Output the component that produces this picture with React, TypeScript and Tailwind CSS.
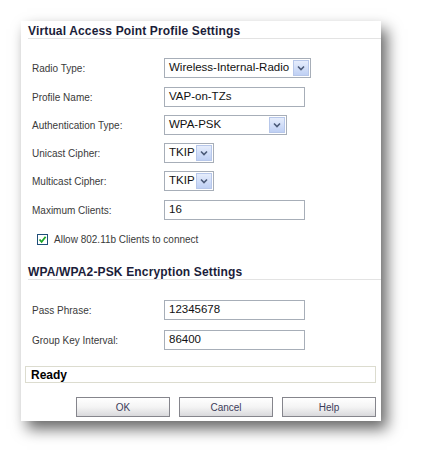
import React from "react";

const LABEL = "w-[143px] shrink-0 pl-[11px] text-[10px] text-[#3a3a3a] [font-family:'Liberation_Sans',Arial,sans-serif]";
const FIELD_TEXT = "text-[11.5px] text-[#111] [font-family:'Liberation_Sans',Arial,sans-serif]";

function Select({ value, width }: { value: string; width: string }) {
  return (
    <div className={`flex h-[20px] items-center border border-[#a7aeb8] bg-white ${width}`}>
      <span className={`flex-1 pl-[4px] leading-none ${FIELD_TEXT}`}>{value}</span>
      <div className="m-[1px] flex h-[16px] w-[16px] items-center justify-center border border-[#b7c7ea] bg-gradient-to-b from-[#e6edfc] to-[#bfd0f4]">
        <svg width="8" height="6" viewBox="0 0 8 6">
          <path d="M1 1.5 L4 4.5 L7 1.5" fill="none" stroke="#4b5a78" strokeWidth="1.6" />
        </svg>
      </div>
    </div>
  );
}

function TextField({ value }: { value: string }) {
  return (
    <div className={`flex h-[20px] w-[141px] items-center border border-[#a7aeb8] bg-white pl-[4px] leading-none ${FIELD_TEXT}`}>
      {value}
    </div>
  );
}

function Row({ label, children, mt }: { label: string; children: React.ReactNode; mt: string }) {
  return (
    <div className={`flex h-[20px] items-center ${mt}`}>
      <span className={LABEL}>{label}</span>
      {children}
    </div>
  );
}

function Heading({ text, mt }: { text: string; mt: string }) {
  return (
    <div className={`ml-[7px] h-[18px] border-b border-[#e3e3e3] pt-[3px] ${mt}`}>
      <span className="block text-[12px] font-bold leading-[14px] tracking-[0.15px] text-[#1b1d3a] [font-family:'Liberation_Sans',Arial,sans-serif]">
        {text}
      </span>
    </div>
  );
}

function Btn({ label }: { label: string }) {
  return (
    <button className="flex h-[20px] w-[94px] items-center justify-center border border-[#85858c] bg-gradient-to-b from-white via-[#f4f4f4] to-[#d9d9dc] text-[10px] text-[#3c3c5a] [font-family:'Liberation_Sans',Arial,sans-serif]">
      {label}
    </button>
  );
}

export default function App() {
  return (
    <div className="h-[463px] w-[423px] bg-white pl-[21px] pt-[21px]">
      <div className="flex h-[400px] w-[360px] flex-col bg-white shadow-[6px_8px_14px_rgba(0,0,0,0.6)]">
        <Heading text="Virtual Access Point Profile Settings" mt="mt-0" />

        <Row label="Radio Type:" mt="mt-[19px]">
          <Select value="Wireless-Internal-Radio" width="w-[147px]" />
        </Row>
        <Row label="Profile Name:" mt="mt-[9px]">
          <TextField value="VAP-on-TZs" />
        </Row>
        <Row label="Authentication Type:" mt="mt-[8px]">
          <Select value="WPA-PSK" width="w-[123px]" />
        </Row>
        <Row label="Unicast Cipher:" mt="mt-[8px]">
          <Select value="TKIP" width="w-[50px]" />
        </Row>
        <Row label="Multicast Cipher:" mt="mt-[8px]">
          <Select value="TKIP" width="w-[50px]" />
        </Row>
        <Row label="Maximum Clients:" mt="mt-[9px]">
          <TextField value="16" />
        </Row>

        <div className="ml-[16px] mt-[12px] flex h-[14px] items-center gap-[6px]">
          <div className="flex h-[11px] w-[11px] items-center justify-center border border-[#1f4f7a] bg-white">
            <svg width="9" height="9" viewBox="0 0 9 9">
              <path d="M1.5 4.5 L3.6 6.8 L7.6 1.8" fill="none" stroke="#1fa52a" strokeWidth="1.8" />
            </svg>
          </div>
          <span className="text-[10px] text-[#3a3a3a] [font-family:'Liberation_Sans',Arial,sans-serif]">
            Allow 802.11b Clients to connect
          </span>
        </div>

        <Heading text="WPA/WPA2-PSK Encryption Settings" mt="mt-[16px]" />

        <Row label="Pass Phrase:" mt="mt-[20px]">
          <TextField value="12345678" />
        </Row>
        <Row label="Group Key Interval:" mt="mt-[10px]">
          <TextField value="86400" />
        </Row>

        <div className="ml-[4px] mt-[16px] flex h-[17px] w-[351px] items-center border border-[#dcdccf] bg-white pl-[5px]">
          <span className="text-[12px] font-bold leading-none text-black [font-family:'Liberation_Sans',Arial,sans-serif]">Ready</span>
        </div>

        <div className="ml-[55px] mt-[14px] flex gap-[9px]">
          <Btn label="OK" />
          <Btn label="Cancel" />
          <Btn label="Help" />
        </div>
      </div>
    </div>
  );
}
